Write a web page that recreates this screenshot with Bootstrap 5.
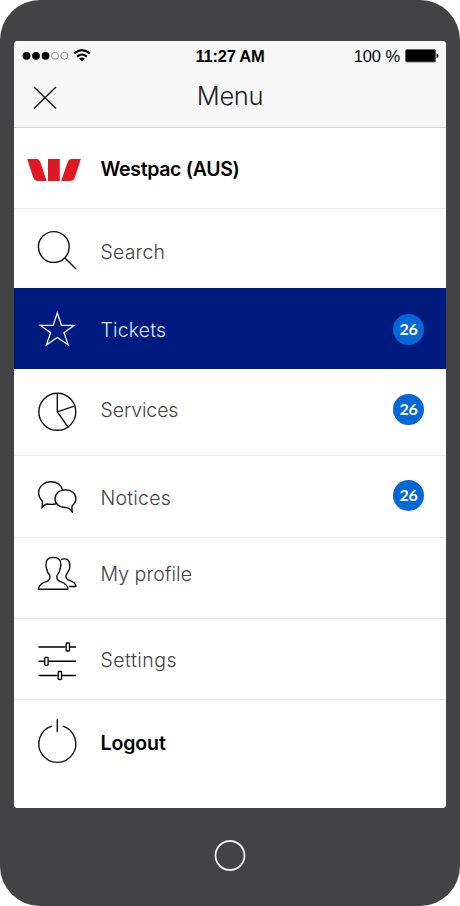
<!DOCTYPE html>
<html lang="en">
<head>
<meta charset="utf-8">
<meta name="viewport" content="width=device-width, initial-scale=1">
<title>Menu</title>
<link href="https://cdn.jsdelivr.net/npm/bootstrap@5.3.0/dist/css/bootstrap.min.css" rel="stylesheet">
<style>
body{background:#fff;font-family:Inter,"Liberation Sans",sans-serif;overflow:hidden}
.phone{width:460px;height:906px;background:#434346;border-radius:40px;padding:41px 14px 0 14px}
.screen{height:767px;border-radius:4px;overflow:hidden}
.top-area{height:87px;background:#f7f7f7;border-bottom:1px solid #d4d4d4;font-family:"Liberation Sans",sans-serif;color:#000}
.status{height:30px;font-size:16.5px;line-height:30px}
.status>*{flex:1}
.clock{letter-spacing:-.22px}
.power{letter-spacing:-.1px}
.title-row{height:56px}
.title-row>*{flex:1}
.title-row h1{font-family:Inter,sans-serif;font-weight:300;font-size:25.5px;line-height:49px;letter-spacing:-.3px;color:#222;margin:0}
.menu-row{padding:0;border:0;border-bottom:1px solid #e9e9e9;border-radius:0;color:#444;background:#fff}
.menu-row svg{flex:none;display:block}
.label{font-size:19.5px;line-height:24px;font-weight:300;white-space:nowrap;margin-left:.5px}
.strong{font-weight:600;color:#000}
.menu-row.current{background:#001b80;color:#dfe4fa;border-color:#001b80}
.count{width:31px;height:31px;border-radius:50%;background:#0566d6;color:#fff;font:700 16px/30px Lato,sans-serif;letter-spacing:-.3px;text-align:center;margin-left:auto;margin-right:22px}
.ink{fill:none;stroke:#111;stroke-width:1.4;stroke-linejoin:round}
.r-bank{height:81px}.r-bank .label{margin-top:29px;letter-spacing:-.33px}
.r-search{height:79px;border:0}.r-search .label{margin-top:31px;letter-spacing:.2px}
.r-tickets{height:81px}.r-tickets .label{margin-top:30px;letter-spacing:.15px}.r-tickets .count{margin-top:26px}
.r-services{height:87px}.r-services .label{margin-top:29px;letter-spacing:-.1px}.r-services .count{margin-top:25px}
.r-notices{height:82px}.r-notices .label{margin-top:30px;letter-spacing:.2px}.r-notices .count{margin-top:24px}
.r-profile{height:81px}.r-profile .label{margin-top:24px;letter-spacing:.05px}
.r-settings{height:81px}.r-settings .label{margin-top:29px;letter-spacing:.5px}
.r-logout{height:108px;border:0}.r-logout .label{margin-top:31px;letter-spacing:-.1px}
.home-wrap{margin-top:32px}
</style>
<script src="https://cdn.jsdelivr.net/npm/bootstrap@5.3.0/dist/js/bootstrap.bundle.min.js"></script>
</head>
<body>
<div class="phone">
 <main class="screen bg-white">
  <header class="top-area">
   <div class="status d-flex">
    <div class="text-start"><svg class="d-block" width="80" height="30" viewBox="14 41 80 30"><g><circle cx="26.5" cy="55.8" r="3.9"/><circle cx="36" cy="55.8" r="3.9"/><circle cx="45.5" cy="55.8" r="3.9"/><g fill="none" stroke="#777" stroke-width=".8"><circle cx="55" cy="55.8" r="3.5"/><circle cx="64.4" cy="55.8" r="3.5"/></g></g><g fill="none" stroke="#000" stroke-width="2.1"><path d="M74.2 53.4Q82 46.7 89.8 53.4M77.2 56.6Q82 52.4 86.8 56.6"/></g><path d="M79 58.7Q82 56.3 85 58.7L82 61.3Z"/></svg></div>
    <div class="clock text-center fw-bold text-nowrap">11:27 AM</div>
    <div class="power d-flex justify-content-end"><span class="text-nowrap">100 %</span><svg width="46" height="30" viewBox="400 41 46 30"><rect x="405.5" y="49.5" width="30" height="12.5" rx="1.5" fill="#000" stroke="#666"/><path d="M436.5 53.5q2 .3 2 2.2t-2 2.2z"/></svg></div>
   </div>
   <div class="title-row d-flex">
    <div><svg class="d-block" width="60" height="56" viewBox="14 71 60 56"><path class="ink" d="M34 87L56 108.500M56 87L34 108.500"/></svg></div>
    <h1 class="text-center">Menu</h1>
    <div></div>
   </div>
  </header>
  <nav class="list-group rounded-0">
   <a class="list-group-item menu-row r-bank d-flex align-items-start"><svg width="86" height="80" viewBox="14 128 86 80"><path fill="#e01823" d="M27.200 159H36.500Q39.300 159 40.300 162L46.700 181H38.500Q34.200 181 33.200 177.500ZM48 159H59.800V181H48ZM71.500 159H80.800L74.800 177.500Q73.800 181 69.500 181H61.100L67.700 162Q68.700 159 71.500 159Z"/></svg><span class="label strong">Westpac (AUS)</span></a>
   <a class="list-group-item menu-row r-search d-flex align-items-start"><svg width="86" height="79" viewBox="14 209 86 79"><g class="ink"><circle cx="53.800" cy="247" r="15.400"/><path d="M64.700 257.800L76 269"/></g></svg><span class="label">Search</span></a>
   <a class="list-group-item menu-row current r-tickets d-flex align-items-start"><svg width="86" height="80" viewBox="14 288 86 80"><path fill="none" stroke="#eef2ff" stroke-width="1.300" d="M57.300 313L61.500 325.300H74.200L64 332.800L68.200 344.800L57.300 337.500L46.500 344.800L50.600 332.800L40.300 325.300H53.200Z"/></svg><span class="label">Tickets</span><span class="count">26</span></a>
   <a class="list-group-item menu-row r-services d-flex align-items-start"><svg width="86" height="86" viewBox="14 369 86 86"><g class="ink"><circle cx="57.300" cy="411.800" r="18.500"/><path d="M57.300 393.300V411.800L75 405.800M57.300 411.800L68 427"/></g></svg><span class="label">Services</span><span class="count">26</span></a>
   <a class="list-group-item menu-row r-notices d-flex align-items-start"><svg width="86" height="81" viewBox="14 456 86 81"><path class="ink" d="M62.500 489.700C60.800 484.900 56.300 481.800 51 481.800C44 481.800 38.600 486.700 38.600 493C38.600 496.300 40 498.700 42.200 501Q42.800 504.500 41.800 508Q43.400 505.200 46.500 504C49.500 504.400 53 504.600 56.200 503.800M72.400 512.200Q70 507.800 66 507.500C59.800 507.900 55 504 55 498.800C55 493.600 59.700 489.700 65.500 489.700C71.300 489.700 75.900 493.600 75.900 498.800C75.900 501.600 74.500 503.800 72.100 505.800Q71.700 509 72.400 512.200Z"/></svg><span class="label">Notices</span><span class="count">26</span></a>
   <a class="list-group-item menu-row r-profile d-flex align-items-start"><svg width="86" height="80" viewBox="14 538 86 80"><path class="ink" d="M38.500 589.300H67.900C67.900 585 65 583.300 60.500 581.700C57.700 580.700 56.800 579.600 56.800 576.500C56.800 574.500 59.400 573.500 59.800 570C60 568.500 61.100 566.800 60.800 564.700C61.200 559.700 58.400 557.400 53.400 557.400C48.300 557.400 45.600 560 46 565C45.800 567.500 46.900 568.600 47.100 570.300C47.500 573.400 50 574.500 50 576.500C50 579.700 48.900 580.700 46.200 581.700C41.500 583.300 38.500 585 38.500 589.300ZM60.800 559.700C66.800 557.300 70.300 560.200 69.700 565.800C70.200 567 69.300 570 68.400 570.900C68 573.200 65.700 574.200 65.900 576.500C65.900 578.700 66.600 579.300 69 580.200C73 581.700 75.900 583 75.900 586.500H69.200"/></svg><span class="label">My profile</span></a>
   <a class="list-group-item menu-row r-settings d-flex align-items-start"><svg width="86" height="80" viewBox="14 619 86 80"><g fill="none" stroke="#000" stroke-width="1.500"><path d="M38.500 647H65.500M69.700 647H76M38.500 661.300H44.200M48.600 661.300H76M38.500 675.500H57.800M62 675.500H76"/><g fill="#fff" stroke-width="1.300"><rect x="66.200" y="643" width="3.300" height="8" rx=".8"/><rect x="44.800" y="657.300" width="3.300" height="8" rx=".8"/><rect x="58.200" y="671.500" width="3.300" height="8" rx=".8"/></g></g></svg><span class="label">Settings</span></a>
   <a class="list-group-item menu-row r-logout d-flex align-items-start"><svg width="86" height="108" viewBox="14 700 86 108"><path class="ink" d="M57.300 719.300V732M51.800 726.200A18.500 18.500 0 1 0 62.800 726.200"/></svg><span class="label strong">Logout</span></a>
  </nav>
 </main>
 <div class="home-wrap d-flex justify-content-center"><svg width="32" height="32" viewBox="0 0 32 32"><circle cx="16" cy="15.500" r="14.500" fill="none" stroke="#ececec" stroke-width="1.800"/></svg></div>
</div>
</body>
</html>
